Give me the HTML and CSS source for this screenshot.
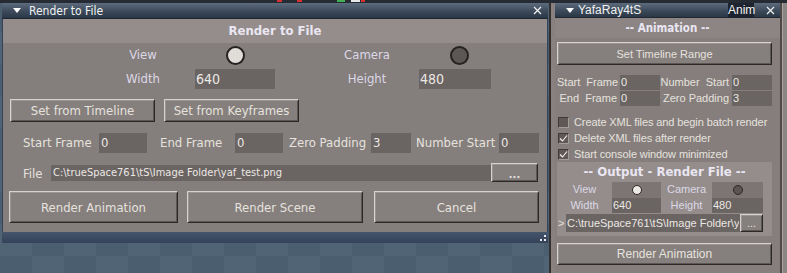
FILE: index.html
```html
<!DOCTYPE html>
<html>
<head>
<meta charset="utf-8">
<title>Render to File</title>
<link rel="stylesheet" href="styles.css">
</head>
<body>
<div class="topstrip"><span class="tb t1"></span><span class="tb t2"></span><span class="tb t3"></span><span class="tb t4"></span><span class="tb t5"></span></div>
<div class="desk">
  <section class="win">
    <header class="titlebar">
      <span class="tri"></span><span class="ttl">Render to File</span>
      <svg class="close" width="9" height="9" viewBox="0 0 9 9"><path d="M1 1L8 8M8 1L1 8" stroke="#f2f2f2" stroke-width="1.2" fill="none"/></svg>
    </header>
    <div class="wbody">
      <div class="whead">Render to File</div>
      <div class="vgrid">
        <span class="vl">View</span><span class="vv"><i class="dot light"></i></span>
        <span class="vl c2">Camera</span><span class="vv"><i class="dot dark"></i></span>
        <span class="vl">Width</span><span class="inp big">640</span>
        <span class="vl c2">Height</span><span class="inp big">480</span>
      </div>
      <div class="brow">
        <div class="btn bw1">Set from Timeline</div>
        <div class="btn bw2">Set from Keyframes</div>
      </div>
      <div class="frow">
        <span class="fl l1">Start Frame</span><span class="inp fi i48">0</span>
        <span class="fl l2">End Frame</span><span class="inp fi i48">0</span>
        <span class="fl l3">Zero Padding</span><span class="inp fi i40">3</span>
        <span class="fl l4">Number Start</span><span class="inp fi i40">0</span>
      </div>
      <div class="filerow">
        <span class="fl lf">File</span>
        <span class="inp path">C:\trueSpace761\tS\Image Folder\yaf_test.png</span>
        <div class="btn dots">...</div>
      </div>
      <div class="bigrow">
        <div class="btn big1">Render Animation</div>
        <div class="btn big2">Render Scene</div>
        <div class="btn big3">Cancel</div>
      </div>
    </div>
    <footer class="wfoot"><span class="grip"></span></footer>
  </section>

  <aside class="side">
    <div class="panel">
      <header class="ptitle">
        <span class="ptri"></span><span class="pttl">YafaRay4tS</span>
        <span class="anim">Anim</span>
        <svg class="pclose" width="9" height="9" viewBox="0 0 9 9"><path d="M1 1L8 8M8 1L1 8" stroke="#f2f2f2" stroke-width="1.2" fill="none"/></svg>
      </header>
      <div class="pbody">
        <div class="phead">-- Animation --</div>
        <div class="btn pbtn">Set Timeline Range</div>
        <div class="prow r1">
          <span class="pl">Start&nbsp; Frame</span><span class="inp pi">0</span>
          <span class="pl w2">Number&nbsp; Start</span><span class="inp pi">0</span>
        </div>
        <div class="prow r2">
          <span class="pl">End&nbsp; Frame</span><span class="inp pi">0</span>
          <span class="pl w2">Zero Padding</span><span class="inp pi">3</span>
        </div>
        <div class="checks">
          <div class="chk"><span class="box"></span>Create XML files and begin batch render</div>
          <div class="chk"><span class="box"><svg width="11" height="11" viewBox="0 0 11 11"><path d="M2 5.5L4.5 8L9 2.5" stroke="#f4f4f4" stroke-width="1.1" fill="none"/></svg></span>Delete XML files after render</div>
          <div class="chk"><span class="box"><svg width="11" height="11" viewBox="0 0 11 11"><path d="M2 5.5L4.5 8L9 2.5" stroke="#f4f4f4" stroke-width="1.1" fill="none"/></svg></span>Start console window minimized</div>
        </div>
        <div class="outband">
          <div class="ohead">-- Output - Render File --</div>
          <div class="ogrid">
            <span class="ol">View</span><span class="obox"><i class="sdot light"></i></span>
            <span class="ol">Camera</span><span class="obox"><i class="sdot dark"></i></span>
            <span class="ol">Width</span><span class="inp oi">640</span>
            <span class="ol">Height</span><span class="inp oi">480</span>
          </div>
          <div class="ofile">
            <span class="gt">&gt;</span>
            <span class="inp opath"><span class="clip">C:\trueSpace761\tS\Image Folder\yaf_test.png</span></span>
            <div class="btn odots">...</div>
          </div>
        </div>
        <div class="btn pbtn2">Render Animation</div>
      </div>
    </div>
    <div class="rail"></div>
  </aside>
</div>
</body>
</html>
```

FILE: styles.css
```css
* { box-sizing: border-box; margin: 0; padding: 0; }

body {
  width: 787px;
  height: 273px;
  overflow: hidden;
  font-family: "DejaVu Sans", sans-serif;
  font-stretch: condensed;
  color: #e6e2de;
  background-color: #4a5e6f;
  background-image:
    linear-gradient(45deg, rgba(255,255,255,0.04) 25%, transparent 25%, transparent 75%, rgba(255,255,255,0.04) 75%),
    linear-gradient(45deg, rgba(255,255,255,0.04) 25%, transparent 25%, transparent 75%, rgba(255,255,255,0.04) 75%);
  background-size: 64px 64px;
  background-position: 0 0, 32px 32px;
}

.topstrip {
  height: 3px;
  background: #262b33;
  display: flex;
}
.tb { display: block; height: 2px; }
.t1 { margin-left: 277px; width: 5px; background: #d83030; }
.t2 { margin-left: 15px; width: 5px; background: #d83030; }
.t3 { margin-left: 35px; width: 8px; background: #40b050; }
.t4 { margin-left: 6px; width: 9px; background: #e8e8e8; }
.t5 { margin-left: 1px; width: 4px; background: #d83030; }

.desk { display: flex; height: 270px; }

/* ---------- left window ---------- */
.win {
  margin-left: 2px;
  width: 546px;
  height: 240px;
  background: #34435a;
  display: flex;
  flex-direction: column;
}

.titlebar, .ptitle {
  height: 16px;
  display: flex;
  align-items: center;
  background: linear-gradient(#5d6c7d, #3c4a5b 55%, #2b3745);
  color: #f2f2f2;
  border-bottom: 1px solid #1f2732;
}
.titlebar { font-size: 12px; }
.tri {
  width: 0; height: 0;
  border-left: 4px solid transparent;
  border-right: 4px solid transparent;
  border-top: 5px solid #ffffff;
  margin-left: 11px;
  margin-right: 8px;
}
.ttl { flex: 1; }
.close { margin-right: 6px; }

.wbody {
  margin: 0 1px;
  height: 213px;
  background: #847e7c;
}
.whead {
  height: 24px;
  background: #948d8b;
  text-align: center;
  font-weight: bold;
  font-size: 13px;
  line-height: 24px;
  color: #eae6f2;
}

.vgrid {
  margin: 2px 0 0 88px;
  display: grid;
  grid-template-columns: 104px 80px 144px 72px;
  grid-template-rows: 20px 20px;
  row-gap: 4px;
  font-size: 13px;
  line-height: 20px;
}
.vl { text-align: center; color: #dcd8e6; }
.vl.c2 { padding-left: 40px; }
.vv { display: flex; align-items: center; justify-content: center; }
.dot {
  display: block;
  width: 19px; height: 19px;
  border-radius: 50%;
  border: 2px solid #262222;
}
.dot.light { background: #e0dcd8; }
.dot.dark { background: #5c5654; margin-left: 8px; }

.inp {
  display: block;
  background: #6a6462;
  color: #ece8e4;
  white-space: nowrap;
  overflow: hidden;
}
.inp.big { font-size: 14px; line-height: 20px; padding-left: 1px; }

.btn {
  display: flex;
  align-items: center;
  justify-content: center;
  background: #857f7d;
  color: #e6e2de;
  border: 1px solid;
  border-color: #d6d2ce #2c2826 #2c2826 #d6d2ce;
  box-shadow: inset 1px 1px 0 #9a9492, inset -1px -1px 0 #5c5654;
  white-space: nowrap;
}

.brow {
  display: flex;
  gap: 9px;
  margin: 10px 0 0 7px;
  height: 23px;
  font-size: 13px;
}
.bw1 { width: 145px; }
.bw2 { width: 135px; }

.frow {
  display: flex;
  margin: 11px 0 0 20px;
  height: 20px;
  font-size: 13px;
  line-height: 20px;
  white-space: nowrap;
}
.fl { display: block; }
.l1 { width: 76px; }
.l2 { width: 88px; padding-left: 13px; }
.l3 { width: 88px; padding-left: 6px; }
.l4 { width: 88px; padding-left: 5px; }
.fi { font-size: 13px; padding-left: 2px; }
.i48 { width: 48px; }
.i40 { width: 40px; }

.filerow {
  display: flex;
  align-items: center;
  margin: 10px 0 0 20px;
  height: 19px;
  font-size: 13px;
}
.lf { width: 28px; line-height: 19px; padding-top: 2px; }
.path {
  width: 440px;
  height: 16px;
  line-height: 16px;
  font-size: 11px;
  padding-left: 2px;
}
.dots { width: 47px; height: 19px; font-weight: bold; font-size: 11px; padding-top: 3px; }

.bigrow {
  display: flex;
  margin: 9px 0 0 6px;
  height: 32px;
  font-size: 13px;
}
.big1 { width: 169px; }
.big2 { width: 176px; margin-left: 9px; }
.big3 { width: 165px; margin-left: 11px; }

.wfoot {
  height: 11px;
  background: linear-gradient(#45556a, #34425a);
  display: flex;
  justify-content: flex-end;
  align-items: center;
}
.grip {
  width: 6px; height: 6px;
  margin-right: 2px;
  background:
    linear-gradient(#e8e8e8, #e8e8e8) 4px 0 / 2px 2px no-repeat,
    linear-gradient(#e8e8e8, #e8e8e8) 0 4px / 2px 2px no-repeat,
    linear-gradient(#e8e8e8, #e8e8e8) 4px 4px / 2px 2px no-repeat;
}

/* ---------- right panel ---------- */
.side {
  margin-left: 1px;
  width: 238px;
  flex: none;
  display: flex;
  background: #88817f;
  border-left: 2px solid #34302f;
  padding-left: 4px;
}
.panel {
  width: 225px;
  flex: none;
  background: #857e7c;
  display: flex;
  flex-direction: column;
  font-family: "Liberation Sans", Arial, sans-serif;
  font-stretch: normal;
}
.ptitle {
  height: 15px;
  font-size: 12px;
}
.ptri {
  width: 0; height: 0;
  border-left: 4px solid transparent;
  border-right: 4px solid transparent;
  border-top: 5px solid #ffffff;
  margin-left: 11px;
  margin-right: 4px;
}
.pttl { width: 150px; flex: none; }
.anim {
  background: #1d2430;
  height: 15px;
  line-height: 15px;
  width: 26px;
  flex: none;
  text-align: center;
  font-size: 12px;
}
.pclose { flex: none; margin-left: 12px; }

.pbody {
  padding: 0 8px 0 2px;
  font-size: 11px;
}
.phead {
  height: 20px;
  line-height: 20px;
  text-align: center;
  font-weight: bold;
  font-size: 11.5px;
  font-family: "DejaVu Sans", sans-serif;
  font-stretch: condensed;
  color: #eae6f2;
  background: #8c8583;
  margin: 0 -8px 0 -2px;
}
.pbtn { margin-top: 4px; height: 23px; font-size: 11px; }

.prow {
  display: flex;
  height: 15px;
  line-height: 15px;
  white-space: nowrap;
}
.r1 { margin-top: 10px; }
.r2 { margin-top: 1px; }
.pl { display: block; width: 63px; text-align: right; padding-right: 3px; }
.pl.w2 { width: 72px; }
.pi { width: 40px; padding-left: 1px; }

.checks { margin-top: 8px; }
.chk {
  height: 16px;
  display: flex;
  align-items: center;
  padding-left: 1px;
  white-space: nowrap;
  letter-spacing: -0.1px;
}
.box {
  width: 11px; height: 11px;
  flex: none;
  background: #5f5856;
  border: 1px solid;
  border-color: #3e3836 #a29c9a #a29c9a #3e3836;
  margin-right: 5px;
  display: flex;
}
.box svg { margin: -1px; }

.outband {
  background: #948d8b;
  padding-bottom: 4px;
}
.ohead {
  height: 20px;
  line-height: 20px;
  text-align: center;
  font-weight: bold;
  font-size: 13px;
  font-family: "DejaVu Sans", sans-serif;
  font-stretch: condensed;
  color: #eae6f2;
}
.ogrid {
  display: grid;
  grid-template-columns: 55px 49px 51px 51px;
  grid-template-rows: 16px 15px;
  line-height: 15px;
  white-space: nowrap;
}
.ol { text-align: center; color: #dcd8e6; }
.obox { background: #7c7573; display: flex; align-items: center; justify-content: center; }
.sdot {
  display: block;
  width: 10px; height: 10px;
  border-radius: 50%;
  border: 1px solid #2a2626;
}
.sdot.light { background: #ece8e4; }
.sdot.dark { background: #5a5452; }
.oi { padding-left: 1px; }

.ofile {
  display: flex;
  margin-top: 1px;
  height: 18px;
  align-items: center;
}
.gt { width: 9px; padding-left: 1px; }
.opath {
  width: 174px;
  height: 18px;
  line-height: 18px;
  font-size: 11px;
  padding-left: 1px;
}
.clip { display: block; width: 172px; overflow: hidden; }
.odots { width: 23px; height: 18px; font-size: 11px; }

.pbtn2 { margin-top: 7px; height: 22px; font-size: 12px; }

.rail {
  flex: 1;
  background: #8b8583;
  border-left: 2px solid #4e4947;
  box-shadow: inset 1px 0 0 #aaa4a2;
}
```
